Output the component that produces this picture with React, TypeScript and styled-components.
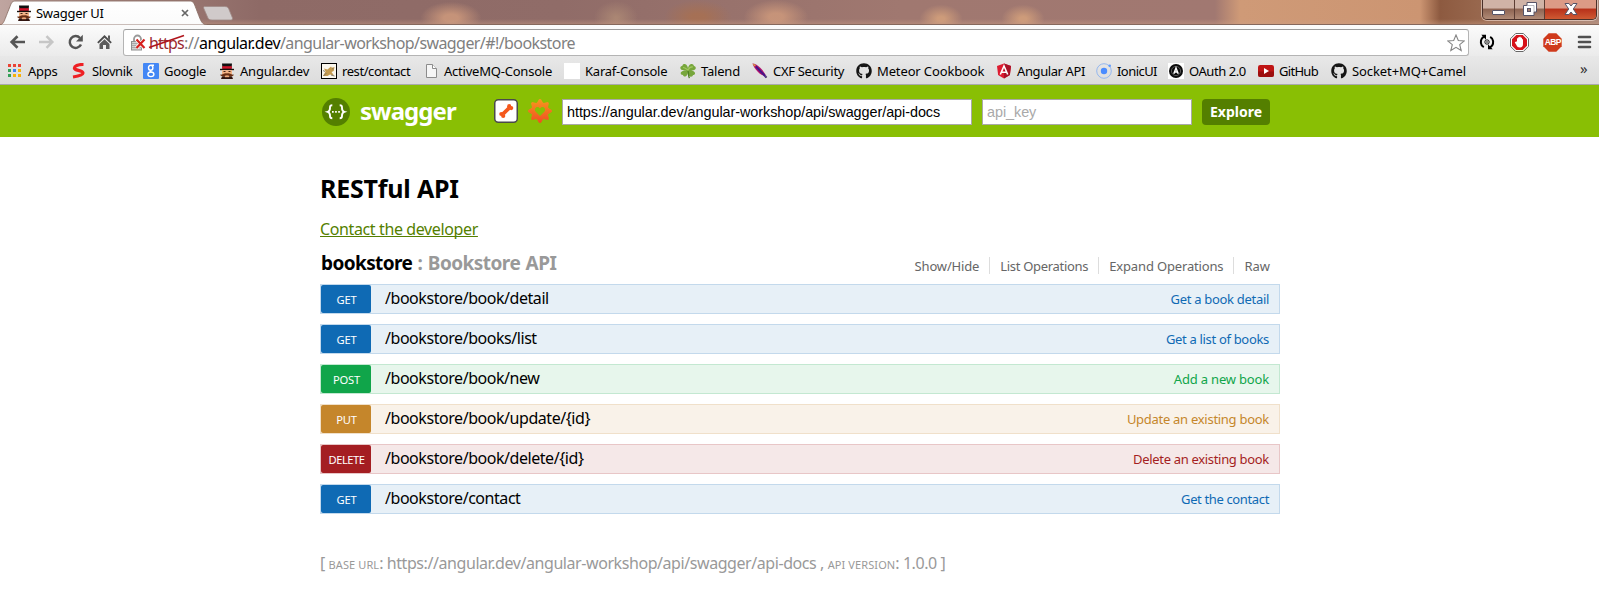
import React from 'react';
import styled, { createGlobalStyle } from 'styled-components';
import { FaGithub } from 'react-icons/fa';

const GlobalStyle = createGlobalStyle`
  *, *::before, *::after { box-sizing: border-box; }
  body { margin: 0; background: #fff; font-family: "Noto Sans", "Open Sans", sans-serif; color: #000; overflow: hidden; }
  svg { display: block; flex: none; }
`;

/* ---------- browser chrome ---------- */

const TitleBar = styled.div`
  position: relative;
  display: flex;
  align-items: flex-start;
  height: 24px;
  background:
    linear-gradient(to bottom, transparent 19px, rgba(205, 160, 135, 0.4) 24px),
    radial-gradient(ellipse 36px 19px at 451px 18px, rgba(200, 149, 122, 0.95) 20%, rgba(200, 149, 122, 0) 85%),
    radial-gradient(ellipse 26px 20px at 616px 18px, rgba(176, 140, 118, 0.8) 5%, rgba(176, 140, 118, 0) 85%),
    radial-gradient(ellipse 34px 17px at 698px 17px, rgba(166, 112, 84, 0.95) 20%, rgba(166, 112, 84, 0) 100%),
    radial-gradient(ellipse 36px 19px at 776px 17px, rgba(200, 149, 122, 0.95) 20%, rgba(200, 149, 122, 0) 90%),
    radial-gradient(ellipse 24px 16px at 941px 19px, rgba(205, 155, 122, 1) 15%, rgba(205, 155, 122, 0) 90%),
    radial-gradient(ellipse 24px 16px at 1023px 19px, rgba(205, 155, 122, 1) 15%, rgba(205, 155, 122, 0) 90%),
    linear-gradient(to right, #bfa5a0 0, #a17f79 120px, #8e6a66 260px, #906c68 560px, #a07870 900px,
      #a17871 1215px, #cf9a77 1240px, #cc9572 1420px, #8d5a40 1440px, #97664c 1475px, #a9877a 1599px);
`;

const Tab = styled.div`
  position: relative;
  width: 206px;
  height: 24px;
  display: flex;
  align-items: center;
  padding: 2px 17px 0 16px;
  gap: 4px;
`;

const TabShape = styled.svg`
  position: absolute;
  left: 0;
  top: 0;
`;

const TabIcon = styled.span`
  position: relative;
`;

const TabTitle = styled.span`
  position: relative;
  flex: 1;
  font-size: 13px;
  letter-spacing: -0.3px;
  line-height: 20px;
`;

const WindowButtons = styled.div`
  display: flex;
  width: 115px;
  height: 20px;
  margin: 0 2px 0 auto;
  border: 1px solid #4a3029;
  border-top: 0;
  border-radius: 0 0 5px 5px;
  box-shadow: 0 0 0 1px rgba(255, 235, 225, 0.55);
  overflow: hidden;
`;

const WindowButton = styled.div<{ $width: number; $close?: boolean }>`
  width: ${p => p.$width}px;
  display: flex;
  justify-content: center;
  border-left: ${p => (p.$width === 31 ? '0' : '1px solid #5c3d33')};
  background: ${p =>
    p.$close
      ? 'linear-gradient(#dc9a86 0 40%, #b8321b 50%, #cf5a33)'
      : 'linear-gradient(#d0b3a6 0 40%, #8f6553 50%, #b08b77)'};
`;

const Toolbar = styled.div`
  display: flex;
  align-items: center;
  height: 32px;
  padding: 0 6px 0 9px;
  border-top: 1px solid #86685c;
  background: linear-gradient(#fbfbfb, #ebebeb);
`;

const NavButtons = styled.div`
  display: flex;
  gap: 12px;
  width: 114px;
  padding-top: 3px;
`;

const Omnibox = styled.div`
  display: flex;
  align-items: center;
  width: 1346px;
  height: 27px;
  margin-top: 4px;
  padding: 0 3px 0 6px;
  border: 1px solid #b4b4b4;
  border-top-color: #9c9c9c;
  border-radius: 3px;
  background: #fff;
`;

const Address = styled.div`
  display: flex;
  flex: 1;
  margin-left: 3px;
  font-size: 16px;
  line-height: 24px;
  color: #808080;
`;

const BrokenScheme = styled.span`
  position: relative;
  width: 35px;
  color: #9b2a30;
  letter-spacing: -0.79px;
`;

const Strike = styled.svg`
  position: absolute;
  left: -1px;
  top: 3px;
`;

const AddressPart = styled.span<{ $host?: boolean; $tracking: number }>`
  color: ${p => (p.$host ? '#000' : '#808080')};
  letter-spacing: ${p => p.$tracking}px;
`;

const Extensions = styled.div`
  display: flex;
  align-items: center;
  justify-content: space-between;
  flex: 1;
  padding: 3px 1px 0 10px;
`;

const BookmarkBar = styled.div`
  display: flex;
  align-items: center;
  height: 29px;
  padding: 1px 0 0 7px;
  border-bottom: 1px solid #a9a9ad;
  background: linear-gradient(#e8e8e8, #dcdcdc);
`;

const Bookmark = styled.div<{ $width: number; $tracking: number }>`
  display: flex;
  align-items: center;
  gap: 5px;
  width: ${p => p.$width}px;
  font-size: 13px;
  line-height: 26px;
  letter-spacing: ${p => p.$tracking}px;
  white-space: nowrap;
`;

const Overflow = styled.span`
  margin-left: 84px;
  margin-top: -5px;
  font-size: 15px;
  line-height: 20px;
  color: #333;
`;

/* ---------- swagger page ---------- */

const Header = styled.header`
  height: 52px;
  padding: 14px 0 0 322px;
  display: flex;
  background: #89bf04;
`;

const Logo = styled.div`
  display: flex;
  width: 172px;
  height: 26px;
  align-items: center;
  gap: 10px;
  color: #fff;
  font-size: 24px;
  font-weight: 700;
  letter-spacing: -0.95px;
  line-height: 24px;
`;

const LogoText = styled.span`
  padding-bottom: 2px;
`;

const HeaderIcons = styled.div`
  display: flex;
  gap: 10px;
  width: 68px;
`;

const Field = styled.input`
  height: 26px;
  margin-right: 10px;
  padding: 1px 4px 2px;
  border: 1px solid #a9a9a9;
  border-radius: 0;
  background: #fff;
  color: #000;
  font: 14.4px "Liberation Sans", Arial, sans-serif;
  letter-spacing: -0.05px;
  outline: none;
  &::placeholder { color: #a9a9a9; opacity: 1; }
`;

const UrlField = styled(Field)`
  width: 410px;
`;

const KeyField = styled(Field)`
  width: 210px;
`;

const ExploreButton = styled.button`
  width: 68px;
  height: 26px;
  padding: 0;
  border: 0;
  border-radius: 4px;
  background: #547f00;
  color: #fff;
  font: 700 14px/26px "Noto Sans", sans-serif;
`;

const Content = styled.main`
  width: 960px;
  margin-left: 320px;
`;

const Title = styled.h1`
  margin: 34px 0 0;
  font-size: 25px;
  line-height: 34px;
  letter-spacing: -0.2px;
`;

const ContactLink = styled.a`
  display: block;
  width: max-content;
  margin-top: 12px;
  font-size: 16px;
  line-height: 24px;
  letter-spacing: -0.38px;
  color: #547f00;
  text-decoration: underline;
  text-decoration-skip-ink: none;
  text-underline-offset: 1px;
`;

const Resource = styled.div`
  display: flex;
  justify-content: space-between;
  height: 43px;
`;

const ResourceName = styled.h2`
  margin: 9px 0 0 1px;
  font-size: 19px;
  line-height: 26px;
  letter-spacing: -0.6px;
  word-spacing: 1px;
`;

const ResourceNote = styled.span`
  color: #999;
  letter-spacing: -0.54px;
`;

const Options = styled.ul`
  display: flex;
  margin: 16px 0 0;
  padding: 0;
  list-style: none;
`;

const Option = styled.li<{ $tracking: number }>`
  height: 17px;
  padding: 0 10px;
  font-size: 13px;
  line-height: 18px;
  color: #666;
  letter-spacing: ${p => p.$tracking}px;
  & + & { border-left: 1px solid #ddd; }
`;

const Operations = styled.div`
  display: grid;
  gap: 10px;
`;

type Method = 'GET' | 'POST' | 'PUT' | 'DELETE';

const palette: Record<Method, { bg: string; border: string; strong: string }> = {
  GET: { bg: '#e7f0f7', border: '#c3d9ec', strong: '#0f6ab4' },
  POST: { bg: '#e7f6ec', border: '#c3e8d1', strong: '#10a54a' },
  PUT: { bg: '#f9f2e9', border: '#f0e0ca', strong: '#c5862b' },
  DELETE: { bg: '#f5e8e8', border: '#e8c6c7', strong: '#a41e22' },
};

const Row = styled.div<{ $method: Method }>`
  display: flex;
  height: 30px;
  border: 1px solid ${p => palette[p.$method].border};
  background: ${p => palette[p.$method].bg};
  color: ${p => palette[p.$method].strong};
`;

const Badge = styled.span<{ $method: Method }>`
  width: 50px;
  height: 28px;
  padding-left: 1px;
  border-radius: 2px;
  background: ${p => palette[p.$method].strong};
  color: #fff;
  font-size: 11.2px;
  line-height: 30px;
  letter-spacing: ${p => (p.$method === 'DELETE' ? -0.5 : -0.25)}px;
  text-align: center;
`;

const Path = styled.span`
  flex: 1;
  padding-left: 14px;
  color: #000;
  font-size: 16px;
  line-height: 26px;
  letter-spacing: -0.45px;
`;

const Summary = styled.span<{ $tracking: number }>`
  padding-right: 10px;
  font-size: 13px;
  line-height: 29px;
  letter-spacing: ${p => p.$tracking}px;
`;

const Footer = styled.footer`
  margin-top: 37px;
  color: #999;
  font-size: 16px;
  line-height: 24px;
  letter-spacing: -0.43px;
  white-space: pre;
`;

const SmallLabel = styled.span`
  font-size: 11px;
  letter-spacing: 0.1px;
`;

/* ---------- icons ---------- */

const Mustache = () => (
  <svg width="16" height="16" viewBox="0 0 16 16">
    <path d="M3 .5h10l-.6 6H3.6z" fill="#111" />
    <path d="M3.2 3.2h9.6v2.6H3.2z" fill="#d3132b" />
    <path d="M1 5.8h14v1.4H1z" fill="#17110f" />
    <path d="M3 7.2h10v4H3z" fill="#f2b184" />
    <path d="M4.5 8h2v1h-2zM9.500 8h2v1h-2z" fill="#3a2116" />
    <path d="M1 11.500c2 .8 4-2 7-1 3-1 5 1.800 7 1-1 2.500-5 2.800-7 1-2 1.800-6 1.500-7-1z" fill="#6a2f14" />
    <path d="M3 13.500h10l1 2.500H2z" fill="#30140f" />
    <path d="M6 12.600h4v1.600H6z" fill="#f0a878" />
  </svg>
);

const AppsIcon = () => (
  <svg width="16" height="16" viewBox="0 0 16 16">
    {['#ea4335', '#ea4335', '#ea4335', '#34a058', '#3f82f0', '#f7b10a', '#34a058', '#f7b10a', '#f7b10a'].map((c, i) => (
      <rect key={i} x={1 + (i % 3) * 5} y={1 + Math.floor(i / 3) * 5} width="3" height="3" fill={c} />
    ))}
  </svg>
);

const SlovnikIcon = () => (
  <svg width="16" height="16" viewBox="0 0 16 16">
    <path d="M12.500 1.500C7 1.300 3 3.200 3.500 5.500c.5 2 8.500 1.800 8.500 4.500 0 2.200-5 3.200-10 4" fill="none" stroke="#ee2024" strokeWidth="3.200" />
  </svg>
);

const GoogleIcon = () => (
  <svg width="16" height="16" viewBox="0 0 16 16">
    <rect width="16" height="16" rx="1" fill="#4387f5" />
    <g fill="none" stroke="#fff" strokeWidth="1.400">
      <ellipse cx="7.700" cy="4.800" rx="2.200" ry="2.500" />
      <ellipse cx="7.900" cy="11.300" rx="3" ry="2.300" />
      <path d="M8.500 2.300H11M8 7.300c-1.200.6-1 1.400.6 2" />
    </g>
  </svg>
);

const CatIcon = () => (
  <svg width="16" height="16" viewBox="0 0 16 16">
    <rect x=".5" y=".5" width="15" height="15" fill="#fbf8ef" stroke="#000" />
    <path d="M2 13l2.500-4.500L3 5.500l3.500 1 3.500-3 .8 1.200 2.700-.7-.8 4L10.500 9l2.500 3.500-4-1-2.500 1.500z" fill="#c49a4f" />
    <path d="M2 7.500l2 1M2.500 13L5.500 10M10 12l3.500 1M11 5.800h1.500" stroke="#7b7466" strokeWidth=".9" />
  </svg>
);

const PageIcon = () => (
  <svg width="16" height="16" viewBox="0 0 16 16">
    <path d="M3.500 1.500h6l4 4v9h-10z" fill="#f6f6f6" stroke="#8c8c8c" />
    <path d="M9.500 1.500v4h4" fill="#fff" stroke="#8c8c8c" />
  </svg>
);

const BlankIcon = () => (
  <svg width="16" height="16">
    <rect width="16" height="16" fill="#fff" />
  </svg>
);

const CloverIcon = () => (
  <svg width="16" height="16" viewBox="0 0 16 16">
    <path d="M8 7C5 7 0 8 .3 4.500.500 3 2 3.200 2.300 3 2.500 1 4 .8 5 1c2 .4 3 3 3 5 0-2 1-4.500 3-5 2-.3 2.500.5 3 2 2 .2 2 2 1.500 3-1 1.700-4 1.500-6 1.500 2 0 5 .5 5.500 2.500.3 1.500-1 2-2 2-.3 1.500-1.500 2-3 1.500C8.500 13 8 10.500 8 9c0 2-1 4-2.500 4.500-1.500.3-2.500-.5-2.500-1.500-1.500 0-2.500-1-2.300-2C1 8 5 7 8 7z" fill="#77a63c" />
    <path d="M8 8c1 3 0 5 1.500 7" stroke="#4f7f24" strokeWidth="1.300" fill="none" />
    <path d="M3 4.500c2 0 3 1 5 2.500 1-2 3-3.500 5-3" stroke="#a3c95f" strokeWidth="1.200" fill="none" />
  </svg>
);

const FeatherIcon = () => (
  <svg width="16" height="16" viewBox="0 0 16 16">
    <path d="M.5.500C3 .8 5 1.500 8 4.500c3 3 5.500 6.500 6 8.500-2 0-5-1-8-4C3 6 1.500 3.500.5.500z" fill="#b3126e" />
    <path d="M.5.500l3.500 1.500-1.500 1.500z" fill="#e0a33b" />
    <path d="M4 3.500l10.500 11" stroke="#43158a" strokeWidth="2" />
    <path d="M13.500 12.500l1.300 2.500" stroke="#777" />
  </svg>
);

const AngularIcon = () => (
  <svg width="16" height="16" viewBox="0 0 16 16">
    <path d="M8 .5l7 2.400-1.100 9.200L8 15.500l-5.900-3.400L1 2.900z" fill="#dd1b30" />
    <path d="M8 .5l7 2.400-1.100 9.200L8 15.500z" fill="#a81228" />
    <path d="M4.300 11.500L8 3l3.700 8.500M5.800 9.200h4.400" fill="none" stroke="#fff" strokeWidth="1.600" />
  </svg>
);

const IonicIcon = () => (
  <svg width="16" height="16" viewBox="0 0 16 16">
    <circle cx="8" cy="8" r="7.300" fill="none" stroke="#94b7ee" strokeWidth="1" />
    <circle cx="8" cy="8" r="3.200" fill="#4a8cff" />
    <circle cx="13.700" cy="2.700" r="1.300" fill="#5f9bff" />
  </svg>
);

const OAuthIcon = () => (
  <svg width="16" height="16" viewBox="0 0 16 16">
    <rect width="16" height="16" fill="#fff" />
    <circle cx="8" cy="8" r="7" fill="#0c0c0c" />
    <circle cx="8" cy="8" r="4.600" fill="none" stroke="#888" strokeWidth=".6" />
    <path d="M5.800 10.800L8 5l2.200 5.800M6.700 9h2.600" fill="none" stroke="#fff" strokeWidth="1.500" />
  </svg>
);

const YoutubeIcon = () => (
  <svg width="16" height="16" viewBox="0 0 16 16">
    <rect y="2" width="16" height="12" rx="2.200" fill="#bf1414" />
    <path d="M0 8.500h16V12a2 2 0 0 1-2 2H2a2 2 0 0 1-2-2z" fill="#8f0c0c" opacity=".7" />
    <path d="M6 5l5 3-5 3z" fill="#fff" />
  </svg>
);

const Octocat = () => <FaGithub size={16} color="#151515" />;

const BackIcon = ({ color }: { color: string }) => (
  <svg width="17" height="18" viewBox="0 0 17 18">
    <path d="M16 9H3M8.500 3.200L2.700 9l5.800 5.800" fill="none" stroke={color} strokeWidth="2.700" />
  </svg>
);

const ForwardIcon = ({ color }: { color: string }) => (
  <svg width="17" height="18" viewBox="0 0 17 18">
    <path d="M1 9h13M8.500 3.200L14.300 9l-5.800 5.800" fill="none" stroke={color} strokeWidth="2.500" />
  </svg>
);

const ReloadIcon = () => (
  <svg width="17" height="18" viewBox="0 0 17 18">
    <path d="M13 5a5.900 5.900 0 1 0 1 6.500" fill="none" stroke="#555" strokeWidth="2.500" />
    <path d="M15.800 1.800v6.700H9z" fill="#555" />
  </svg>
);

const HomeIcon = () => (
  <svg width="17" height="18" viewBox="0 0 17 18">
    <path d="M8.500 2L15.800 9.300l-1.300 1.300L8.500 4.700l-6 5.900-1.300-1.300z" fill="#4d4d4d" />
    <path d="M12 2.500h2v5l-2-2zM8.500 6.300l5 4.800V16H10v-4H7v4H3.500v-4.900z" fill="#5c5c5c" />
  </svg>
);

const BrokenLock = () => (
  <svg width="16" height="18" viewBox="0 0 16 18">
    <path d="M4 8V5a3.500 3.500 0 0 1 7 0v3" fill="none" stroke="#9a9a9a" strokeWidth="1.800" />
    <rect x="1.500" y="7.500" width="10" height="8.500" fill="#d2d2d2" stroke="#8f8f8f" />
    <path d="M2 9.500h9M2 11.500h9M2 13.500h9" stroke="#a9a9a9" />
    <path d="M6.500 5.500l8 8.500M14.500 5.500l-8 8.500" stroke="#fff" strokeWidth="3.600" />
    <path d="M6.500 5.500l8 8.500M14.500 5.500l-8 8.500" stroke="#d5201c" strokeWidth="2.200" />
  </svg>
);

const StarIcon = () => (
  <svg width="18" height="18" viewBox="0 0 18 18">
    <path d="M9 1l2.300 5.500 6 .4-4.600 3.800 1.500 5.800L9 13.300l-5.200 3.200 1.500-5.800L.7 6.900l6-.4z" fill="#fff" stroke="#858585" strokeWidth="1.100" />
  </svg>
);

const SyncIcon = () => (
  <svg width="16" height="16" viewBox="0 0 16 16">
    <path d="M5 2.600C2.500 4 1.700 6 1.900 8.800c.2 2 1.300 3.500 2.900 4.400M11 13.400c2.500-1.400 3.300-3.400 3.100-6.200-.2-2-1.300-3.500-2.900-4.400" fill="none" stroke="#000" strokeWidth="2" />
    <path d="M2.300.800H7v5zM13.700 15.200H9v-5z" fill="#000" />
    <circle cx="8" cy="8" r="2.200" fill="none" stroke="#000" strokeWidth=".9" />
    <circle cx="8" cy="8" r=".8" fill="#000" />
  </svg>
);

const StopHandIcon = () => (
  <svg width="19" height="19" viewBox="0 0 19 19">
    <path d="M5.700.500h7.600l5.200 5.200v7.600l-5.200 5.200H5.700L.5 13.300V5.700z" fill="#fff" stroke="#666" />
    <path d="M6.300 2h6.400L17 6.300v6.400L12.700 17H6.300L2 12.700V6.300z" fill="#d6121a" />
    <path d="M6 8.500h1V5.200h1.200V4.200h1.300v-.5h1.200v1h1.300v1.500h1V11c0 2.300-1 3.500-3 3.500s-2.800-1-3.500-2.300L4.800 9.500z" fill="#fff" />
  </svg>
);

const AbpBadge = styled.span`
  display: grid;
  place-items: center;
  width: 19px;
  height: 19px;
  & > * { grid-area: 1 / 1; }
`;

const AbpText = styled.span`
  position: relative;
  color: #fff;
  font: 700 8.5px/12px "Liberation Sans", sans-serif;
  letter-spacing: -0.6px;
`;

const AbpIcon = () => (
  <AbpBadge>
    <svg width="19" height="19" viewBox="0 0 19 19">
      <path d="M5.700.300h7.600l5.400 5.400v7.600l-5.400 5.400H5.700L.3 13.300V5.700z" fill="#cf3a1c" />
    </svg>
    <AbpText>ABP</AbpText>
  </AbpBadge>
);

const MenuIcon = () => (
  <svg width="15" height="14" viewBox="0 0 15 14">
    <path d="M2 2h11M2 7h11M2 12h11" stroke="#505050" strokeWidth="2.600" strokeLinecap="round" />
  </svg>
);

const SwaggerMark = () => (
  <svg width="28" height="28" viewBox="0 0 28 28">
    <circle cx="14" cy="14" r="14" fill="#547f00" />
    <g fill="none" stroke="#fff" strokeWidth="1.900">
      <path d="M10.300 7.300c-2.200 0-2.300.7-2.300 2.200 0 2 .2 3.500-2.300 4.300C8.200 14.600 8 16 8 18c0 1.600.2 2.300 2.300 2.300M17.700 7.300c2.200 0 2.300.7 2.300 2.200 0 2-.2 3.500 2.300 4.300C19.800 14.600 20 16 20 18c0 1.600-.2 2.300-2.300 2.300" />
    </g>
    <path d="M10 13h1.700v1.700H10zM13.100 13h1.700v1.700h-1.700zM16.200 13h1.700v1.700h-1.700z" fill="#fff" />
  </svg>
);

const BoneIcon = () => (
  <svg width="24" height="24" viewBox="0 0 24 24">
    <rect x=".75" y=".75" width="22.500" height="22.500" rx="3.500" fill="#fff" stroke="#4a4a4a" strokeWidth="1.500" />
    <g fill="#f4581c">
      <path d="M7.800 13.600l6.200-6 2.600 2.600-6.200 6z" />
      <circle cx="15.200" cy="7.200" r="2.100" />
      <circle cx="17.200" cy="9.100" r="2.100" />
      <circle cx="7.300" cy="15" r="2.100" />
      <circle cx="9.200" cy="17" r="2.100" />
    </g>
  </svg>
);

const teeth = Array.from({ length: 8 }, (_, i) => i * 45);

const HeartGearIcon = () => (
  <svg width="24" height="24" viewBox="0 0 24 24">
    <defs>
      <linearGradient id="gear" gradientUnits="userSpaceOnUse" x1="12" y1="0" x2="12" y2="24">
        <stop offset="0" stopColor="#f7981d" />
        <stop offset="1" stopColor="#f04e23" />
      </linearGradient>
      <mask id="gearShape">
        <circle cx="12" cy="12" r="8.900" fill="#fff" />
        {teeth.map(a => (
          <path key={a} d="M8.600 4.500l1.900-3.400a1.600 1.600 0 0 1 3 0L15.400 4.500z" fill="#fff" transform={`rotate(${a} 12 12)`} />
        ))}
        <path d="M12 17l-4.500-4.600C5.800 10.300 8 7 10.700 8.200L12 9.500l1.300-1.300C16 7 18.200 10.300 16.500 12.400z" fill="#000" />
      </mask>
    </defs>
    <rect width="24" height="24" fill="url(#gear)" mask="url(#gearShape)" />
  </svg>
);

/* ---------- data ---------- */

const bookmarks: { label: string; width: number; tracking: number; icon: React.FC }[] = [
  { label: 'Apps', width: 64, tracking: -0.3, icon: AppsIcon },
  { label: 'Slovnik', width: 72, tracking: -0.4, icon: SlovnikIcon },
  { label: 'Google', width: 76, tracking: -0.3, icon: GoogleIcon },
  { label: 'Angular.dev', width: 102, tracking: -0.22, icon: Mustache },
  { label: 'rest/contact', width: 102, tracking: -0.42, icon: CatIcon },
  { label: 'ActiveMQ-Console', width: 141, tracking: -0.22, icon: PageIcon },
  { label: 'Karaf-Console', width: 116, tracking: -0.23, icon: BlankIcon },
  { label: 'Talend', width: 72, tracking: -0.2, icon: CloverIcon },
  { label: 'CXF Security', width: 104, tracking: -0.3, icon: FeatherIcon },
  { label: 'Meteor Cookbook', width: 140, tracking: -0.13, icon: Octocat },
  { label: 'Angular API', width: 100, tracking: -0.4, icon: AngularIcon },
  { label: 'IonicUI', width: 72, tracking: -0.55, icon: IonicIcon },
  { label: 'OAuth 2.0', width: 90, tracking: -0.45, icon: OAuthIcon },
  { label: 'GitHub', width: 73, tracking: -0.7, icon: YoutubeIcon },
  { label: 'Socket+MQ+Camel', width: 165, tracking: -0.09, icon: Octocat },
];

const options: [string, number][] = [
  ['Show/Hide', -0.17],
  ['List Operations', -0.3],
  ['Expand Operations', -0.16],
  ['Raw', 0],
];

const operations: { method: Method; path: string; summary: string; tracking: number }[] = [
  { method: 'GET', path: '/bookstore/book/detail', summary: 'Get a book detail', tracking: -0.3 },
  { method: 'GET', path: '/bookstore/books/list', summary: 'Get a list of books', tracking: -0.32 },
  { method: 'POST', path: '/bookstore/book/new', summary: 'Add a new book', tracking: -0.18 },
  { method: 'PUT', path: '/bookstore/book/update/{id}', summary: 'Update an existing book', tracking: -0.28 },
  { method: 'DELETE', path: '/bookstore/book/delete/{id}', summary: 'Delete an existing book', tracking: -0.32 },
  { method: 'GET', path: '/bookstore/contact', summary: 'Get the contact', tracking: -0.36 },
];

const apiUrl = 'https://angular.dev/angular-workshop/api/swagger/api-docs';

export default function App() {
  return (
    <>
      <GlobalStyle />
      <TitleBar>
        <Tab>
          <TabShape width="240" height="25" viewBox="0 0 240 25">
            <defs>
              <linearGradient id="tab" x1="0" y1="0" x2="0" y2="1">
                <stop offset="0" stopColor="#fff" />
                <stop offset="1" stopColor="#fbfbfb" />
              </linearGradient>
            </defs>
            <path d="M0 25c4-1 4-4 10-18.500C11.500 2.500 12 1 16 1h173c4 0 4.800 1.500 6.300 5.500C201 21 201 24 207 25z" fill="url(#tab)" stroke="#8c7068" strokeWidth=".9" />
            <path d="M205 6.500h19.500c3 0 3.700 1 4.500 3l3.300 8c.6 2-.3 2.500-2 2.500H212c-3 0-3.700-1-4.500-3l-3.700-8.500c-.5-1.500 0-2 1.200-2z" fill="#d0caca" stroke="#a08a86" strokeWidth=".8" />
          </TabShape>
          <TabIcon><Mustache /></TabIcon>
          <TabTitle>Swagger UI</TabTitle>
          <TabIcon>
            <svg width="8" height="8" viewBox="0 0 8 8">
              <path d="M1 1l6 6M7 1L1 7" stroke="#666" strokeWidth="1.700" />
            </svg>
          </TabIcon>
        </Tab>
        <WindowButtons>
          <WindowButton $width={31}>
            <svg width="13" height="19" viewBox="0 0 13 19"><rect x=".5" y="10.500" width="12" height="4" rx=".5" fill="#fff" stroke="#565468" /></svg>
          </WindowButton>
          <WindowButton $width={30}>
            <svg width="14" height="19" viewBox="0 0 14 19">
              <path d="M4 2.500h9.500v9.500H11V15.500H.500V5.500H4z" fill="#fff" stroke="#565468" />
              <path d="M3.500 5.500H11V12" fill="none" stroke="#8a8896" strokeWidth=".6" />
              <rect x="4.500" y="8.500" width="3" height="3" fill="#a58474" stroke="#565468" />
            </svg>
          </WindowButton>
          <WindowButton $width={52} $close>
            <svg width="14" height="19" viewBox="0 0 14 19">
              <path d="M1 3.500h4L7 6l2-2.500h4L9.300 9l3.700 5.500H9L7 12l-2 2.500H1L4.700 9z" fill="#fff" stroke="#565468" />
            </svg>
          </WindowButton>
        </WindowButtons>
      </TitleBar>
      <Toolbar>
        <NavButtons>
          <BackIcon color="#555" />
          <ForwardIcon color="#c6c6c6" />
          <ReloadIcon />
          <HomeIcon />
        </NavButtons>
        <Omnibox>
          <BrokenLock />
          <Address>
            <BrokenScheme>
              https
              <Strike width="37" height="16" viewBox="0 0 37 16"><path d="M1 13.500L36 1.500" stroke="#b0151c" strokeWidth="1.700" /></Strike>
            </BrokenScheme>
            <AddressPart $tracking={-0.4}>://</AddressPart>
            <AddressPart $host $tracking={-0.52}>angular.dev</AddressPart>
            <AddressPart $tracking={-0.58}>/angular-workshop/swagger/#!/bookstore</AddressPart>
          </Address>
          <StarIcon />
        </Omnibox>
        <Extensions>
          <SyncIcon />
          <StopHandIcon />
          <AbpIcon />
          <MenuIcon />
        </Extensions>
      </Toolbar>
      <BookmarkBar>
        {bookmarks.map(({ label, width, tracking, icon: Icon }) => (
          <Bookmark key={label} $width={width} $tracking={tracking}>
            <Icon />
            {label}
          </Bookmark>
        ))}
        <Overflow>»</Overflow>
      </BookmarkBar>
      <Header>
        <Logo>
          <SwaggerMark />
          <LogoText>swagger</LogoText>
        </Logo>
        <HeaderIcons>
          <BoneIcon />
          <HeartGearIcon />
        </HeaderIcons>
        <UrlField defaultValue={apiUrl} />
        <KeyField placeholder="api_key" />
        <ExploreButton>Explore</ExploreButton>
      </Header>
      <Content>
        <Title>RESTful API</Title>
        <ContactLink>Contact the developer</ContactLink>
        <Resource>
          <ResourceName>
            bookstore <ResourceNote>: Bookstore API</ResourceNote>
          </ResourceName>
          <Options>
            {options.map(([label, tracking]) => (
              <Option key={label} $tracking={tracking}>{label}</Option>
            ))}
          </Options>
        </Resource>
        <Operations>
          {operations.map(op => (
            <Row key={op.path} $method={op.method}>
              <Badge $method={op.method}>{op.method}</Badge>
              <Path>{op.path}</Path>
              <Summary $tracking={op.tracking}>{op.summary}</Summary>
            </Row>
          ))}
        </Operations>
        <Footer>
          {'[ '}
          <SmallLabel>BASE URL</SmallLabel>
          {`: ${apiUrl} , `}
          <SmallLabel>API VERSION</SmallLabel>
          {': 1.0.0 ]'}
        </Footer>
      </Content>
    </>
  );
}
